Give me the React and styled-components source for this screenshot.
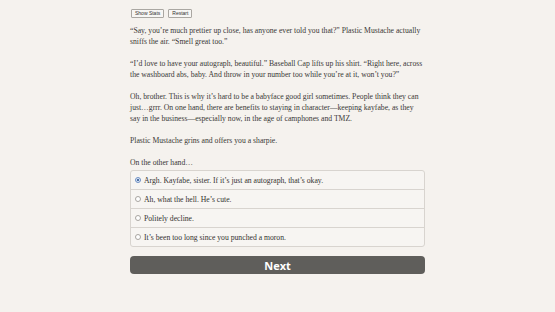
import styled, { createGlobalStyle } from 'styled-components';
import { useState } from "react";

const GlobalStyle = createGlobalStyle`
  html, body {
    margin: 0;
    padding: 0;
    background: #f5f2ee;
  }
`;

const paragraphs = [
  "\u201cSay, you\u2019re much prettier up close, has anyone ever told you that?\u201d Plastic Mustache actually sniffs the air. \u201cSmell great too.\u201d",
  "\u201cI\u2019d love to have your autograph, beautiful.\u201d Baseball Cap lifts up his shirt. \u201cRight here, across the washboard abs, baby. And throw in your number too while you\u2019re at it, won\u2019t you?\u201d",
  "Oh, brother. This is why it\u2019s hard to be a babyface good girl sometimes. People think they can just\u2026grrr. On one hand, there are benefits to staying in character\u2014keeping kayfabe, as they say in the business\u2014especially now, in the age of camphones and TMZ.",
  "Plastic Mustache grins and offers you a sharpie.",
  "On the other hand\u2026",
];

const choices = [
  "Argh. Kayfabe, sister. If it\u2019s just an autograph, that\u2019s okay.",
  "Ah, what the hell. He\u2019s cute.",
  "Politely decline.",
  "It\u2019s been too long since you punched a moron.",
];

function App() {
  const [selected, setSelected] = useState(0);

  return (
    <Page>
      <GlobalStyle />
      <Toolbar>
        <SmallButton>Show Stats</SmallButton>
        <SmallButton>Restart</SmallButton>
      </Toolbar>
      <Story>
        {paragraphs.map((p, i) => (
          <p key={i}>{p}</p>
        ))}
      </Story>
      <Choices>
        {choices.map((c, i) => (
          <Choice key={i} onClick={() => setSelected(i)}>
            <Radio $checked={selected === i} />
            {c}
          </Choice>
        ))}
      </Choices>
      <NextButton>Next</NextButton>
    </Page>
  );
}

export default App;

const Page = styled.div`
  width: 295px;
  margin: 0 auto;
  padding-top: 9px;
  font-family: "Liberation Serif", "Times New Roman", serif;
  color: #3a3836;
`;

const Toolbar = styled.div`
  display: flex;
  gap: 4px;
  margin-left: 1px;
`;

const SmallButton = styled.button`
  font-family: "Liberation Sans", Arial, sans-serif;
  font-size: 5px;
  height: 9px;
  padding: 0 3px;
  line-height: 7px;
  background: #f7f6f4;
  color: #333;
  border: 1px solid #aaa7a2;
  border-radius: 1px;
`;

const Story = styled.div`
  margin-top: 7px;
  font-size: 7.7px;
  line-height: 11px;

  p {
    margin: 0 0 11px 0;
  }
  p:last-child {
    margin-bottom: 2px;
  }
`;

const Choices = styled.div`
  border: 1px solid #d8d4cf;
  border-radius: 3px;
  background: #f7f5f2;
`;

const Choice = styled.div`
  display: flex;
  align-items: center;
  gap: 3px;
  height: 18px;
  padding: 0 4px;
  font-size: 7.7px;
  color: #353331;
  cursor: pointer;
  & + & {
    border-top: 1px solid #d8d4cf;
  }
`;

const Radio = styled.span`
  width: 4px;
  height: 4px;
  border: 1px solid #999;
  border-radius: 50%;
  background: ${(p) => (p.$checked ? "radial-gradient(circle, #4a6fa5 40%, #dfe8f5 45%)" : "#fff")};
  border-color: ${(p) => (p.$checked ? "#6c8fc4" : "#a8a5a0")};
`;

const NextButton = styled.button`
  display: block;
  width: 100%;
  margin-top: 9px;
  height: 18px;
  border: none;
  border-radius: 4px;
  background: #5f5e5b;
  color: #fff;
  font-family: "Open Sans", "DejaVu Sans", sans-serif;
  font-weight: 700;
  font-size: 11px;
  cursor: pointer;
`;
